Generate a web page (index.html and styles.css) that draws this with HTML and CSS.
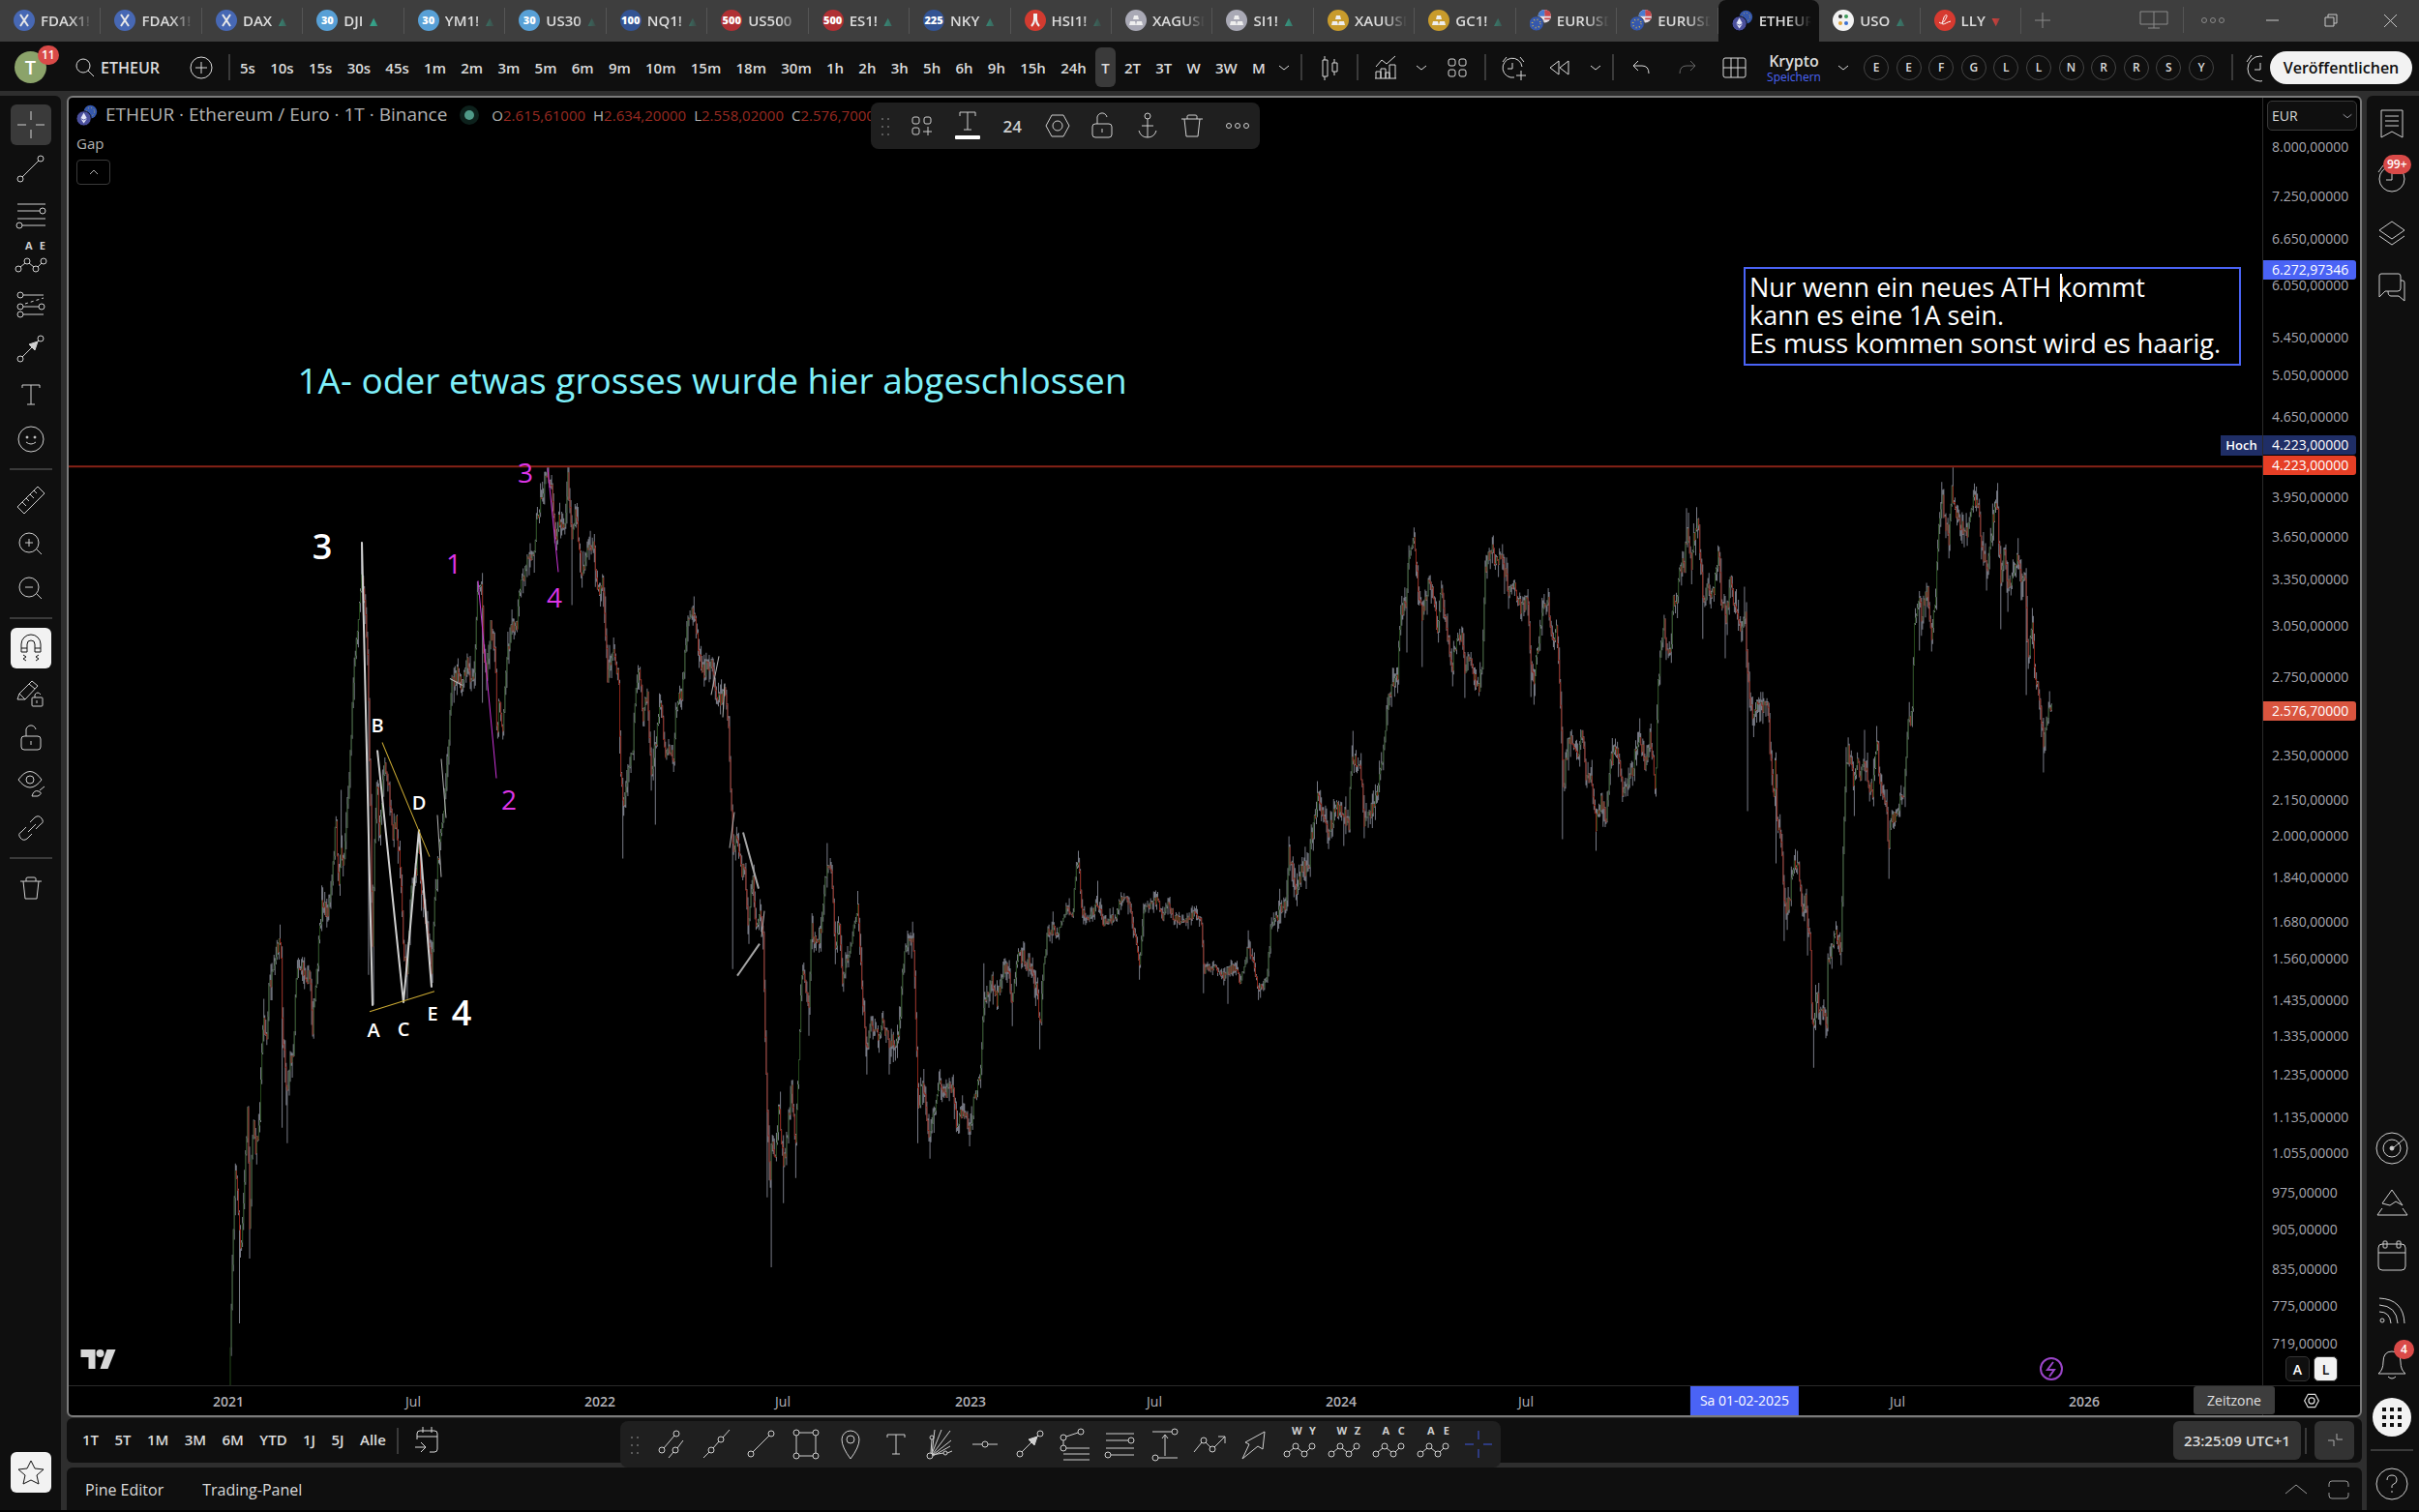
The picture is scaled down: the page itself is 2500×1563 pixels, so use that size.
FILE: index.html
```html
<!DOCTYPE html>
<html lang="de">
<head>
    <meta charset="UTF-8">
    <meta name="viewport" content="width=device-width, initial-scale=1.0">
    <title>ETHEUR Chart</title>
    <link rel="stylesheet" href="styles.css">
</head>
<body>

<!-- Icon sprite -->
<svg class="sprite" aria-hidden="true">
    <symbol id="i-x" viewBox="0 0 22 22"><circle cx="11" cy="11" r="11" fill="#4768b4" stroke="none"/><path d="M7 5l8 12M15 5L7 17" stroke="#e8e8e8" stroke-width="2"/></symbol>
    <symbol id="i-hsi" viewBox="0 0 22 22"><circle cx="11" cy="11" r="11" fill="#d23b30" stroke="none"/><path d="M10 4v6c0 3-1 5-3 7M12 4v6c0 3 1 5 3 7" stroke="#f0f0f0" stroke-width="2"/></symbol>
    <symbol id="i-bars" viewBox="0 0 22 22"><circle cx="11" cy="11" r="11" fill="currentColor" stroke="none"/><path d="M9 6h4l1 4H8zM5 12h5l1 4H4zM12 12h5l1 4h-7z" fill="#eee" stroke="none"/></symbol>
    <symbol id="i-eurusd" viewBox="0 0 26 26"><circle cx="18" cy="8" r="8" fill="#e6e0e6" stroke="none"/><path d="M18 0a8 8 0 0 1 8 8h-8z" fill="#c8474b" stroke="none"/><path d="M18 3h7M18 11h7" stroke="#c8474b" stroke-width="2"/><path d="M10 8a8 8 0 0 1 8-8v8z" fill="#4a7bd0" stroke="none"/><circle cx="8" cy="17" r="9" fill="#3558ad" stroke="#3e3e3e"/><circle cx="8" cy="17" r="5" stroke="#e0c24a" stroke-width="2" stroke-dasharray="1 3"/></symbol>
    <symbol id="i-eth" viewBox="0 0 26 26"><circle cx="17" cy="9" r="8" fill="#3558ad" stroke="none"/><circle cx="17" cy="9" r="5" stroke="#e0c24a" stroke-dasharray="1 3"/><circle cx="9" cy="17" r="9" fill="#4a4f9c" stroke="#000"/><path d="M9 10l4 7-4 6-4-6z" fill="#e4e6f8" stroke="none"/><path d="M5 17l4 2 4-2" stroke="#4a4f9c"/></symbol>
    <symbol id="i-uso" viewBox="0 0 22 22"><circle cx="11" cy="11" r="11" fill="#f2f2f2" stroke="none"/><g stroke="none"><circle cx="8" cy="7" r="2" fill="#333"/><circle cx="14" cy="7" r="2" fill="#3c9b5a"/><circle cx="8" cy="14" r="2" fill="#e0a53a"/><circle cx="14" cy="14" r="2" fill="#3a6fd0"/></g></symbol>
    <symbol id="i-lly" viewBox="0 0 22 22"><circle cx="11" cy="11" r="11" fill="#d63a30" stroke="none"/><path d="M5 13c3 3 6-1 8-6 1-2-2-2-3 1-1 4-3 7-1 7s4-2 8-3" stroke="#fff"/></symbol>

    <symbol id="i-plus" viewBox="0 0 36 36"><path d="M18 10v16M10 18h16"/></symbol>
    <symbol id="i-screens" viewBox="0 0 36 36"><path d="M4 9h28v13H4zM18 9v17M12 26h12"/></symbol>
    <symbol id="i-dots" viewBox="0 0 36 36"><circle cx="9" cy="18" r="2.5"/><circle cx="18" cy="18" r="2.5"/><circle cx="27" cy="18" r="2.5"/></symbol>
    <symbol id="i-min" viewBox="0 0 36 36"><path d="M12 18h13"/></symbol>
    <symbol id="i-restore" viewBox="0 0 36 36"><path d="M12 15h9v9h-9zM15 15v-3h9v9h-3"/></symbol>
    <symbol id="i-close" viewBox="0 0 36 36"><path d="M12 12l13 13M25 12L12 25"/></symbol>
    <symbol id="i-search" viewBox="0 0 36 36"><circle cx="16" cy="16" r="7"/><path d="M21 21l6 6"/></symbol>
    <symbol id="i-pluscircle" viewBox="0 0 36 36"><circle cx="18" cy="18" r="11"/><path d="M18 12v12M12 18h12"/></symbol>
    <symbol id="i-chev" viewBox="0 0 16 16"><path d="M3 6l5 4 5-4"/></symbol>
    <symbol id="i-up" viewBox="0 0 16 16"><path d="M4 10l4-4 4 4"/></symbol>
    <symbol id="i-candles" viewBox="0 0 36 36"><path d="M11 10h5v17h-5zM13 6v4M13 27v4M21 13h5v9h-5zM23 9v4M23 22v4"/></symbol>
    <symbol id="i-indicators" viewBox="0 0 36 36"><path d="M8 17l6-7 5 4 9-8M8 29v-7h5v7M13 29V19h5v10M18 29v-6h4v6M22 29V15h6v14M7 29h22"/></symbol>
    <symbol id="i-grid" viewBox="0 0 36 36"><rect x="9" y="9" width="7" height="7" rx="2"/><rect x="20" y="9" width="7" height="7" rx="2"/><rect x="9" y="20" width="7" height="7" rx="2"/><rect x="20" y="20" width="7" height="7" rx="2"/></symbol>
    <symbol id="i-alarm" viewBox="0 0 36 36"><path d="M27 17a10 10 0 1 0-8 11M17 13v6h-5M7 12l4-5M29 12l-4-5M26 21v10M21 26h10"/></symbol>
    <symbol id="i-rewind" viewBox="0 0 36 36"><path d="M17 11v14l-9-7zM27 11v14l-9-7z"/></symbol>
    <symbol id="i-undo" viewBox="0 0 36 36"><path d="M15 11l-5 5 5 5M10 16h9q7 0 7 8"/></symbol>
    <symbol id="i-redo" viewBox="0 0 36 36"><path d="M21 11l5 5-5 5M26 16h-9q-7 0-7 8"/></symbol>
    <symbol id="i-layout" viewBox="0 0 36 36"><rect x="7" y="8" width="23" height="20" rx="2"/><path d="M15 8v20M22 8v20M7 18h23"/></symbol>

    <symbol id="i-cross" viewBox="0 0 36 36"><path d="M18 4v9M18 23v9M4 18h9M23 18h9"/></symbol>
    <symbol id="i-line" viewBox="0 0 36 36"><circle cx="7" cy="28" r="3"/><circle cx="28" cy="7" r="3"/><path d="M9 26L26 9"/></symbol>
    <symbol id="i-fib" viewBox="0 0 36 36"><path d="M4 7h29M4 14h23M4 22h29M9 29h24"/><circle cx="30" cy="14" r="3"/><circle cx="6" cy="29" r="3"/></symbol>
    <symbol id="i-wave" viewBox="0 0 36 36"><circle cx="5" cy="28" r="3"/><circle cx="14" cy="20" r="3"/><circle cx="23" cy="28" r="3"/><circle cx="31" cy="20" r="3"/><path d="M7 26l5-4M16 22l5 4M25 26l4-4"/></symbol>
    <symbol id="i-forecast" viewBox="0 0 36 36"><circle cx="7" cy="8" r="3"/><circle cx="7" cy="20" r="3"/><circle cx="7" cy="28" r="3"/><circle cx="29" cy="20" r="3"/><path d="M10 8h21M10 20h16M10 28h21"/><path d="M12 17l19-6" stroke-dasharray="3 3"/></symbol>
    <symbol id="i-arrow" viewBox="0 0 36 36"><circle cx="7" cy="28" r="3"/><circle cx="28" cy="7" r="3"/><path d="M9 26L26 9"/><path d="M25 10l-3 9-6-6z" fill="currentColor"/></symbol>
    <symbol id="i-text" viewBox="0 0 36 36"><path d="M9 11V8h18v3M18 8v20M14 28h8"/></symbol>
    <symbol id="i-smile" viewBox="0 0 36 36"><circle cx="18" cy="18" r="13"/><path d="M13 21q5 4 10 0"/><circle cx="14" cy="16" r="1" fill="currentColor"/><circle cx="22" cy="16" r="1" fill="currentColor"/></symbol>
    <symbol id="i-ruler" viewBox="0 0 36 36"><path d="M4 26L25 5l7 7-21 21zM9 21l4 4M13 17l3 3M17 13l4 4M21 9l3 3"/></symbol>
    <symbol id="i-zoomin" viewBox="0 0 36 36"><circle cx="16" cy="17" r="10"/><path d="M24 24l5 5M16 13v8M12 17h8"/></symbol>
    <symbol id="i-zoomout" viewBox="0 0 36 36"><circle cx="16" cy="17" r="10"/><path d="M24 24l5 5M12 17h8"/></symbol>
    <symbol id="i-magnet" viewBox="0 0 36 36"><path d="M8 22v-8a10 10 0 0 1 20 0v8h-6v-8a4 4 0 0 0-8 0v8zM8 18h6M22 18h6M10 25l3 2-3 2 3 2M26 25l-3 2 3 2-3 2"/></symbol>
    <symbol id="i-penlock" viewBox="0 0 36 36"><path d="M4 24l2-6L19 5l6 5-13 14zM6 18l6 6M16 8l6 5"/><rect x="19" y="22" width="11" height="9" rx="1"/><path d="M22 22v-3q3-4 6 0M24 25v3"/></symbol>
    <symbol id="i-lock" viewBox="0 0 36 36"><rect x="8" y="16" width="20" height="14" rx="3"/><path d="M13 16v-5a5 5 0 0 1 10-2M18 21v4"/></symbol>
    <symbol id="i-eye" viewBox="0 0 36 36"><path d="M5 14q12-17 24 0q-12 16-24 0z"/><circle cx="17" cy="14" r="4"/><path d="M19 31q2-7 7-5t-1 5zM27 25l5-4"/></symbol>
    <symbol id="i-link" viewBox="0 0 36 36"><path d="M15 22l8-8M17 12l5-5q4-3 7 1t-1 6l-5 5M19 24l-5 5q-4 3-7-1t1-6l5-5"/></symbol>
    <symbol id="i-trash" viewBox="0 0 36 36"><path d="M7 11h22M10 11l2 18h12l2-18M13 11V8q0-1 2-1h6q2 0 2 1v3"/></symbol>
    <symbol id="i-star" viewBox="0 0 36 36"><path d="M18 6l4 8 9 1-7 6 2 9-8-4-8 4 2-9-7-6 9-1z"/></symbol>

    <symbol id="i-template" viewBox="0 0 36 36"><rect x="8" y="9" width="7" height="7" rx="2"/><rect x="20" y="9" width="7" height="7" rx="2"/><rect x="8" y="20" width="7" height="7" rx="2"/><path d="M24 19v9M19 24h9"/></symbol>
    <symbol id="i-color" viewBox="0 0 36 36"><path d="M10 8V4h16v4M18 4v18M14 22h8"/><rect x="5" y="28" width="26" height="4" rx="1" fill="#fff" stroke="none"/></symbol>
    <symbol id="i-hex" viewBox="0 0 36 36"><path d="M12 7h12l6 11-6 11H12L6 18z"/><circle cx="18" cy="18" r="5"/></symbol>
    <symbol id="i-anchor" viewBox="0 0 36 36"><circle cx="18" cy="8" r="3"/><path d="M18 11v19M12 18h12M9 23q2 7 9 7t9-7"/></symbol>
    <symbol id="i-grip" viewBox="0 0 16 24"><path d="M5 4v18M11 4v18" stroke-width="2" stroke-dasharray="2 6"/></symbol>

    <symbol id="i-channel" viewBox="0 0 36 36"><circle cx="8" cy="24" r="3"/><circle cx="23" cy="7" r="3"/><circle cx="22" cy="24" r="3"/><path d="M10 22L21 9M15 32l5-6M24 22l6-8"/></symbol>
    <symbol id="i-ray" viewBox="0 0 36 36"><circle cx="13" cy="24" r="3"/><circle cx="23" cy="13" r="3"/><path d="M5 32l6-6M15 22l6-7M25 11l7-8"/></symbol>
    <symbol id="i-rect" viewBox="0 0 36 36"><path d="M11 6h14M11 30h14M8 9v18M28 9v18"/><circle cx="8" cy="6" r="3"/><circle cx="28" cy="6" r="3"/><circle cx="8" cy="30" r="3"/><circle cx="28" cy="30" r="3"/></symbol>
    <symbol id="i-pin" viewBox="0 0 36 36"><path d="M18 33Q9 21 9 13a9 9 0 0 1 18 0q0 8-9 20z"/><circle cx="18" cy="13" r="4"/></symbol>
    <symbol id="i-fan" viewBox="0 0 36 36"><circle cx="7" cy="30" r="3"/><circle cx="9" cy="11" r="2"/><circle cx="23" cy="27" r="2"/><path d="M8 27L9 13M9 28l3-25M9 28L19 3M10 28L28 4M10 29l19-15M10 30l18-10M9 29l12-2M25 27l5-2"/></symbol>
    <symbol id="i-hline" viewBox="0 0 36 36"><circle cx="18" cy="18" r="3"/><path d="M5 18h10M21 18h10"/></symbol>
    <symbol id="i-fibext" viewBox="0 0 36 36"><circle cx="6" cy="11" r="3"/><circle cx="24" cy="5" r="3"/><circle cx="6" cy="22" r="3"/><path d="M9 10l12-4M6 14v5M9 22h24M6 28h27M6 34h27"/></symbol>
    <symbol id="i-range" viewBox="0 0 36 36"><circle cx="28" cy="5" r="3"/><circle cx="8" cy="32" r="3"/><path d="M5 5h20M11 32h20M18 30V9M15 12l3-4 3 4"/></symbol>
    <symbol id="i-path" viewBox="0 0 36 36"><circle cx="12" cy="14" r="3"/><circle cx="21" cy="23" r="3"/><path d="M2 26l8-10M14 16l5 5M23 21L34 10M27 10h7v7"/></symbol>
    <symbol id="i-bigarrow" viewBox="0 0 36 36"><path d="M6 33l7-15-4-2L29 5l-2 18-5-3z"/></symbol>

    <symbol id="i-watch" viewBox="0 0 36 36"><path d="M7 4h22v28l-11-6-11 6zM11 10h14M11 15h14M11 20h14"/></symbol>
    <symbol id="i-clock" viewBox="0 0 36 36"><circle cx="18" cy="19" r="13"/><path d="M18 13v7h-6M4 12l5-7"/></symbol>
    <symbol id="i-layers" viewBox="0 0 36 36"><path d="M18 6l13 9-13 9-13-9zM5 21l13 9 13-9"/></symbol>
    <symbol id="i-chat" viewBox="0 0 36 36"><path d="M7 4h18q2 0 2 3v12q0 3-3 3H11l-6 6V6q0-2 2-2zM27 11h2q2 0 2 2v19l-6-5h-8q-3 0-3-5"/></symbol>
    <symbol id="i-radar" viewBox="0 0 36 36"><circle cx="18" cy="18" r="16"/><circle cx="18" cy="18" r="9"/><circle cx="18" cy="18" r="2" fill="currentColor"/><path d="M20 17l11-9"/></symbol>
    <symbol id="i-pine" viewBox="0 0 36 36"><path d="M18 5l11 16-7-4-6 4-8-2zM8 24l-5 7h31l-5-7"/></symbol>
    <symbol id="i-cal" viewBox="0 0 36 36"><rect x="4" y="6" width="28" height="27" rx="4"/><path d="M4 15h28"/><rect x="9" y="3" width="4" height="7" rx="1"/><rect x="23" y="3" width="4" height="7" rx="1"/></symbol>
    <symbol id="i-feed" viewBox="0 0 36 36"><circle cx="8" cy="29" r="2"/><path d="M5 20q11 0 12 12M5 13q18 1 19 19M5 6q25 1 26 26"/></symbol>
    <symbol id="i-bell" viewBox="0 0 36 36"><path d="M4 29h28q-5-4-5-12 0-11-9-11T9 17q0 8-5 12zM14 32q4 4 8 0"/></symbol>
    <symbol id="i-help" viewBox="0 0 36 36"><circle cx="18" cy="18" r="16"/><path d="M13 14q0-5 5-5t5 5q0 3-3 4t-2 4M18 25v2"/></symbol>
    <symbol id="i-goto" viewBox="0 0 36 36"><path d="M9 17v-6q0-3 3-3h15q3 0 3 3v16q0 3-3 3h-5M9 14h21M15 4v6M24 4v6M7 25h10M13 20l5 5-5 5"/></symbol>
    <symbol id="i-collapse" viewBox="0 0 36 36"><path d="M11 18h6v6M20 11v6h6"/></symbol>
    <symbol id="i-wideup" viewBox="0 0 36 36"><path d="M7 22l11-9 11 9"/></symbol>
    <symbol id="i-max" viewBox="0 0 36 36"><path d="M8 15v-3q0-3 3-3h14q3 0 3 3v3M8 21v3q0 3 3 3h14q3 0 3-3v-3"/></symbol>
</svg>

<header class="tabbar">
    <nav class="tabs">
        <a class="tab" href="#"><svg class="logo"><use href="#i-x"/></svg><span class="tab-name">FDAX1!</span></a>
        <a class="tab" href="#"><svg class="logo"><use href="#i-x"/></svg><span class="tab-name">FDAX1!</span></a>
        <a class="tab" href="#"><svg class="logo"><use href="#i-x"/></svg><span class="tab-name">DAX <i class="up">▲</i></span></a>
        <a class="tab" href="#"><b class="logo sky">30</b><span class="tab-name">DJI <i class="up">▲</i></span></a>
        <a class="tab" href="#"><b class="logo sky">30</b><span class="tab-name">YM1! <i class="up">▲</i></span></a>
        <a class="tab" href="#"><b class="logo sky">30</b><span class="tab-name">US30 <i class="up">▲</i></span></a>
        <a class="tab" href="#"><b class="logo navy">100</b><span class="tab-name">NQ1! <i class="up">▲</i></span></a>
        <a class="tab" href="#"><b class="logo crimson">500</b><span class="tab-name">US500</span></a>
        <a class="tab" href="#"><b class="logo crimson">500</b><span class="tab-name">ES1! <i class="up">▲</i></span></a>
        <a class="tab" href="#"><b class="logo navy">225</b><span class="tab-name">NKY <i class="up">▲</i></span></a>
        <a class="tab" href="#"><svg class="logo"><use href="#i-hsi"/></svg><span class="tab-name">HSI1! <i class="up">▲</i></span></a>
        <a class="tab" href="#"><svg class="logo silver"><use href="#i-bars"/></svg><span class="tab-name">XAGUSD</span></a>
        <a class="tab" href="#"><svg class="logo silver"><use href="#i-bars"/></svg><span class="tab-name">SI1! <i class="up">▲</i></span></a>
        <a class="tab" href="#"><svg class="logo gold"><use href="#i-bars"/></svg><span class="tab-name">XAUUSD</span></a>
        <a class="tab" href="#"><svg class="logo gold"><use href="#i-bars"/></svg><span class="tab-name">GC1! <i class="up">▲</i></span></a>
        <a class="tab" href="#"><svg class="logo"><use href="#i-eurusd"/></svg><span class="tab-name">EURUSD</span></a>
        <a class="tab" href="#"><svg class="logo"><use href="#i-eurusd"/></svg><span class="tab-name">EURUSD</span></a>
        <a class="tab active" href="#"><svg class="logo"><use href="#i-eth"/></svg><span class="tab-name">ETHEUR</span></a>
        <a class="tab" href="#"><svg class="logo"><use href="#i-uso"/></svg><span class="tab-name">USO <i class="up">▲</i></span></a>
        <a class="tab" href="#"><svg class="logo"><use href="#i-lly"/></svg><span class="tab-name">LLY <i class="down">▼</i></span></a>
    </nav>
    <div class="window-tools">
        <button class="win-new" aria-label="Neuer Tab"><svg class="icon"><use href="#i-plus"/></svg></button>
        <button class="win-btn" aria-label="Bildschirme"><svg class="icon"><use href="#i-screens"/></svg></button>
        <button class="win-btn lined" aria-label="Menü"><svg class="icon"><use href="#i-dots"/></svg></button>
        <button class="win-btn bright" aria-label="Minimieren"><svg class="icon"><use href="#i-min"/></svg></button>
        <button class="win-btn bright" aria-label="Verkleinern"><svg class="icon"><use href="#i-restore"/></svg></button>
        <button class="win-btn bright" aria-label="Schliessen"><svg class="icon"><use href="#i-close"/></svg></button>
    </div>
</header>

<div class="toolbar">
    <button class="avatar" aria-label="Profil">T<span class="badge">11</span></button>
    <button class="symbol"><svg class="icon"><use href="#i-search"/></svg>ETHEUR</button>
    <button class="tool" aria-label="Vergleichen"><svg class="icon"><use href="#i-pluscircle"/></svg></button>
    <span class="sep"></span>
    <div class="intervals">
        <button>5s</button><button>10s</button><button>15s</button><button>30s</button><button>45s</button>
        <button>1m</button><button>2m</button><button>3m</button><button>5m</button><button>6m</button><button>9m</button>
        <button>10m</button><button>15m</button><button>18m</button><button>30m</button>
        <button>1h</button><button>2h</button><button>3h</button><button>5h</button><button>6h</button><button>9h</button>
        <button>15h</button><button>24h</button><button class="on">T</button><button>2T</button><button>3T</button>
        <button>W</button><button>3W</button><button>M</button>
    </div>
    <button class="drop" aria-label="Intervalle"><svg class="small"><use href="#i-chev"/></svg></button>
    <span class="sep"></span>
    <button class="tool" aria-label="Kerzen"><svg class="icon"><use href="#i-candles"/></svg></button>
    <span class="sep"></span>
    <button class="tool" aria-label="Indikatoren"><svg class="icon"><use href="#i-indicators"/></svg></button>
    <button class="drop" aria-label="Favoriten"><svg class="small"><use href="#i-chev"/></svg></button>
    <button class="tool" aria-label="Vorlagen"><svg class="icon"><use href="#i-grid"/></svg></button>
    <span class="sep"></span>
    <button class="tool" aria-label="Alarm"><svg class="icon"><use href="#i-alarm"/></svg></button>
    <button class="tool" aria-label="Replay"><svg class="icon"><use href="#i-rewind"/></svg></button>
    <button class="drop" aria-label="Replay Optionen"><svg class="small"><use href="#i-chev"/></svg></button>
    <span class="sep"></span>
    <button class="tool" aria-label="Rückgängig"><svg class="icon"><use href="#i-undo"/></svg></button>
    <button class="tool dim" aria-label="Wiederholen"><svg class="icon"><use href="#i-redo"/></svg></button>
    <button class="tool" aria-label="Layout"><svg class="icon"><use href="#i-layout"/></svg></button>
    <button class="layout-name">Krypto<span>Speichern</span></button>
    <button class="drop" aria-label="Layouts"><svg class="small"><use href="#i-chev"/></svg></button>
    <div class="letters">
        <button>E</button><button>E</button><button>F</button><button>G</button><button>L</button><button>L</button>
        <button>N</button><button>R</button><button>R</button><button>S</button><button>Y</button>
    </div>
    <span class="sep"></span>
    <button class="cut" aria-label="Schnellsuche"><svg class="icon"><use href="#i-clock"/></svg></button>
    <button class="publish">Veröffentlichen</button>
</div>

<div class="workspace">
    <aside class="side left">
        <div class="tools tools-draw">
            <button class="on" aria-label="Fadenkreuz"><svg class="icon"><use href="#i-cross"/></svg></button>
            <button aria-label="Trendlinie"><svg class="icon"><use href="#i-line"/></svg></button>
            <button aria-label="Fibonacci"><svg class="icon"><use href="#i-fib"/></svg></button>
            <button class="wave" aria-label="Elliott"><span><b>A</b><b>E</b></span><svg class="icon"><use href="#i-wave"/></svg></button>
            <button aria-label="Prognose"><svg class="icon"><use href="#i-forecast"/></svg></button>
            <button aria-label="Pfeil"><svg class="icon"><use href="#i-arrow"/></svg></button>
            <button aria-label="Text"><svg class="icon"><use href="#i-text"/></svg></button>
            <button aria-label="Icons"><svg class="icon"><use href="#i-smile"/></svg></button>
        </div>
        <hr>
        <div class="tools tools-zoom">
            <button aria-label="Messen"><svg class="icon"><use href="#i-ruler"/></svg></button>
            <button aria-label="Vergrössern"><svg class="icon"><use href="#i-zoomin"/></svg></button>
            <button aria-label="Verkleinern"><svg class="icon"><use href="#i-zoomout"/></svg></button>
        </div>
        <hr>
        <div class="tools tools-lock">
            <button class="white" aria-label="Magnet"><svg class="icon"><use href="#i-magnet"/></svg></button>
            <button aria-label="Zeichenmodus"><svg class="icon"><use href="#i-penlock"/></svg></button>
            <button aria-label="Sperren"><svg class="icon"><use href="#i-lock"/></svg></button>
            <button aria-label="Ausblenden"><svg class="icon"><use href="#i-eye"/></svg></button>
            <button aria-label="Verknüpfen"><svg class="icon"><use href="#i-link"/></svg></button>
        </div>
        <hr>
        <div class="tools">
            <button aria-label="Löschen"><svg class="icon"><use href="#i-trash"/></svg></button>
        </div>
        <div class="tools last">
            <button class="white" aria-label="Favoriten"><svg class="icon"><use href="#i-star"/></svg></button>
        </div>
    </aside>

    <main class="center">
        <section class="chart">
            <div class="plot" id="plot">
                <svg class="candles" id="candles" viewBox="0 0 2267 1330" preserveAspectRatio="none">
                    <path class="price-line" d="M0 381H2267"/>
                    <path class="wick" id="wicks"/>
                    <path class="bull" id="bulls"/>
                    <path class="bear" id="bears"/>
                    <path class="draw thick" d="M303 459L314 938M319 674L346 935L362 756L375 919"/>
                    <path class="draw" d="M381 741l4 64M385 683l5 61M394 600l13 7M672 577l-8 40M678 605l-2 35M688 738l-5 37M719 840l-3 27"/>
                    <path class="draw soft" d="M697 759l16 58M691 907l23-33"/>
                    <path class="draw yellow" d="M324 666L373 784M311 944L378 923"/>
                    <path class="draw pink" d="M423 499L442 703M495 383L506 490"/>
                </svg>
                <div class="legend">
                    <div class="legend-title">
                        <svg class="pair"><use href="#i-eth"/></svg>
                        <h1>ETHEUR · Ethereum / Euro · 1T · Binance</h1>
                        <span class="live"></span>
                        <span class="ohlc">O<em>2.615,61000</em></span>
                        <span class="ohlc">H<em>2.634,20000</em></span>
                        <span class="ohlc">L<em>2.558,02000</em></span>
                        <span class="ohlc">C<em>2.576,7000</em></span>
                    </div>
                    <div class="legend-study">Gap</div>
                    <button class="legend-toggle" aria-label="Legende einklappen"><svg class="small"><use href="#i-up"/></svg></button>
                </div>
                <div class="float-bar edit-bar">
                    <svg class="grip"><use href="#i-grip"/></svg>
                    <button aria-label="Vorlage"><svg class="icon"><use href="#i-template"/></svg></button>
                    <button aria-label="Textfarbe"><svg class="icon"><use href="#i-color"/></svg></button>
                    <button class="size">24</button>
                    <button aria-label="Einstellungen"><svg class="icon"><use href="#i-hex"/></svg></button>
                    <button aria-label="Sperren"><svg class="icon"><use href="#i-lock"/></svg></button>
                    <button aria-label="Verankern"><svg class="icon"><use href="#i-anchor"/></svg></button>
                    <button aria-label="Entfernen"><svg class="icon"><use href="#i-trash"/></svg></button>
                    <button aria-label="Mehr"><svg class="icon"><use href="#i-dots"/></svg></button>
                </div>
                <div class="note">
                    <textarea rows="3" aria-label="Notiz" spellcheck="false">Nur wenn ein neues ATH kommt
kann es eine 1A sein.
Es muss kommen sonst wird es haarig.</textarea>
                    <span class="caret"></span>
                </div>
                <span class="high-tag">Hoch</span>
                <svg class="tv" viewBox="0 0 36 20"><path d="M0 0h15v20H8V8H0z"/><circle cx="20" cy="4" r="4"/><path d="M27 0h9l-8 20h-8z"/></svg>
                <svg class="bolt" viewBox="0 0 26 26"><circle cx="13" cy="13" r="11"/><path d="M15 6l-6 8h7l-5 7"/></svg>
            </div>
            <div class="price-axis" id="prices">
                <select class="currency" aria-label="Währung"><option>EUR</option></select>
                <svg class="cur-chev"><use href="#i-chev"/></svg>
                <div class="scale-mode"><button>A</button><button class="on">L</button></div>
            </div>
            <div class="time-axis" id="times">
                <span class="zone-tip">Zeitzone</span>
            </div>
            <button class="axis-gear" aria-label="Achseneinstellungen"><svg class="gear"><use href="#i-hex"/></svg></button>
        </section>

        <div class="range-bar">
            <div class="ranges">
                <button>1T</button><button>5T</button><button>1M</button><button>3M</button><button>6M</button>
                <button>YTD</button><button>1J</button><button>5J</button><button>Alle</button>
            </div>
            <span class="sep"></span>
            <button class="tool" aria-label="Gehe zu"><svg class="icon"><use href="#i-goto"/></svg></button>
            <button class="clock">23:25:09 UTC+1</button>
            <span class="sep"></span>
            <button class="fold" aria-label="Einklappen"><svg class="icon"><use href="#i-collapse"/></svg></button>

            <div class="float-bar fav-bar">
                <svg class="grip"><use href="#i-grip"/></svg>
                <button aria-label="Kanal"><svg class="icon"><use href="#i-channel"/></svg></button>
                <button aria-label="Linie"><svg class="icon"><use href="#i-ray"/></svg></button>
                <button aria-label="Trendlinie"><svg class="icon"><use href="#i-line"/></svg></button>
                <button aria-label="Rechteck"><svg class="icon"><use href="#i-rect"/></svg></button>
                <button aria-label="Pin"><svg class="icon"><use href="#i-pin"/></svg></button>
                <button aria-label="Text"><svg class="icon"><use href="#i-text"/></svg></button>
                <button aria-label="Fächer"><svg class="icon"><use href="#i-fan"/></svg></button>
                <button aria-label="Horizontale"><svg class="icon"><use href="#i-hline"/></svg></button>
                <button aria-label="Pfeil"><svg class="icon"><use href="#i-arrow"/></svg></button>
                <button aria-label="Fib-Erweiterung"><svg class="icon"><use href="#i-fibext"/></svg></button>
                <button aria-label="Fib-Retracement"><svg class="icon"><use href="#i-fib"/></svg></button>
                <button aria-label="Preisspanne"><svg class="icon"><use href="#i-range"/></svg></button>
                <button aria-label="Pfad"><svg class="icon"><use href="#i-path"/></svg></button>
                <button aria-label="Pfeilmarkierung"><svg class="icon"><use href="#i-bigarrow"/></svg></button>
                <button class="wave" aria-label="Welle WY"><span><b>W</b><b>Y</b></span><svg class="icon"><use href="#i-wave"/></svg></button>
                <button class="wave" aria-label="Welle WZ"><span><b>W</b><b>Z</b></span><svg class="icon"><use href="#i-wave"/></svg></button>
                <button class="wave" aria-label="Welle AC"><span><b>A</b><b>C</b></span><svg class="icon"><use href="#i-wave"/></svg></button>
                <button class="wave" aria-label="Welle AE"><span><b>A</b><b>E</b></span><svg class="icon"><use href="#i-wave"/></svg></button>
                <button class="blue" aria-label="Fadenkreuz"><svg class="icon"><use href="#i-cross"/></svg></button>
            </div>
        </div>

        <footer class="panel-bar">
            <button>Pine Editor</button>
            <button>Trading-Panel</button>
            <div class="panel-icons">
                <button aria-label="Öffnen"><svg class="icon"><use href="#i-wideup"/></svg></button>
                <button aria-label="Maximieren"><svg class="icon"><use href="#i-max"/></svg></button>
            </div>
        </footer>
    </main>

    <aside class="side right">
        <div class="apps">
            <button aria-label="Watchlist"><svg class="icon"><use href="#i-watch"/></svg></button>
            <button aria-label="Alarme"><svg class="icon"><use href="#i-clock"/></svg><span class="badge wide">99+</span></button>
            <button aria-label="Objektbaum"><svg class="icon"><use href="#i-layers"/></svg></button>
            <button aria-label="Chat"><svg class="icon"><use href="#i-chat"/></svg></button>
        </div>
        <div class="apps bottom">
            <button aria-label="Screener"><svg class="icon"><use href="#i-radar"/></svg></button>
            <button aria-label="Pine"><svg class="icon"><use href="#i-pine"/></svg></button>
            <button aria-label="Kalender"><svg class="icon"><use href="#i-cal"/></svg></button>
            <button aria-label="Feed"><svg class="icon"><use href="#i-feed"/></svg></button>
            <button aria-label="Mitteilungen"><svg class="icon"><use href="#i-bell"/></svg><span class="badge">4</span></button>
            <button class="launcher" aria-label="Produkte"><svg viewBox="0 0 24 24"><path d="M2 4h20M2 12h20M2 20h20"/></svg></button>
        </div>
        <hr>
        <button class="help" aria-label="Hilfe"><svg class="icon"><use href="#i-help"/></svg></button>
    </aside>
</div>

<script src="chart.js"></script>
</body>
</html>
```

FILE: styles.css
```css
* {
    box-sizing: border-box;
}

body {
    margin: 0;
    height: 100vh;
    display: flex;
    flex-direction: column;
    overflow: hidden;
    padding-bottom: 2px;
    background: #000;
    color: #dbdbdb;
    font-family: "Open Sans", "Noto Sans", sans-serif;
    font-size: 15px;
}

button,
select,
textarea {
    font: inherit;
    color: inherit;
    background: none;
    border: 0;
    padding: 0;
    margin: 0;
}

button {
    display: flex;
    align-items: center;
    justify-content: center;
    flex: none;
    white-space: nowrap;
    cursor: pointer;
}

a {
    color: inherit;
    text-decoration: none;
}

svg {
    fill: none;
    stroke: currentColor;
    flex: none;
}

.sprite {
    position: absolute;
    width: 0;
    height: 0;
}

.icon {
    width: 36px;
    height: 36px;
}

.small {
    width: 16px;
    height: 16px;
}

.sep {
    flex: none;
    width: 2px;
    height: 27px;
    margin: 0 4px;
    background: #3a3a3a;
}

.badge {
    position: absolute;
    min-width: 21px;
    height: 20px;
    padding: 0 4px;
    border-radius: 10px;
    background: #d94a48;
    color: #fff;
    font-size: 12px;
    font-weight: 600;
    line-height: 20px;
    text-align: center;
}

/* Tabs */
.tabbar {
    display: flex;
    flex: none;
    height: 43px;
    background: #3e3e3e;
}

.tabs {
    display: flex;
    flex: 1;
    min-width: 0;
}

.tab {
    display: flex;
    align-items: center;
    flex: 1 1 0;
    min-width: 0;
    gap: 6px;
    padding: 0 2px 2px 14px;
    font-weight: 600;
    background: linear-gradient(#555, #555) right center / 1px 27px no-repeat;
}

.tab.active {
    background: #0f0f0f;
    border-radius: 8px 8px 0 0;
}

.tab-name {
    flex: 1;
    overflow: hidden;
    white-space: nowrap;
    -webkit-mask-image: linear-gradient(90deg, #000 50%, transparent 90%);
    mask-image: linear-gradient(90deg, #000 50%, transparent 90%);
}

.tab-name i {
    font-size: 14px;
    font-style: normal;
}

.up {
    color: #35a38a;
}

.down {
    color: #e0413c;
}

.logo {
    flex: none;
    width: 22px;
    height: 22px;
    border-radius: 50%;
    color: #fff;
    font-size: 11px;
    line-height: 22px;
    text-align: center;
}

svg.logo {
    border-radius: 0;
}

.sky {
    background: #58a0d6;
}

.navy {
    background: #335493;
}

.crimson {
    background: #b03034;
}

.silver {
    color: #a9a9b5;
}

.gold {
    color: #c89b2c;
}

.window-tools {
    display: flex;
    padding-bottom: 2px;
    color: #8a8a8a;
}

.win-new {
    width: 44px;
    margin-right: 62px;
}

.win-btn {
    width: 61px;
}

.win-btn.lined {
    background: linear-gradient(#555, #555) left center / 1px 27px no-repeat;
}

.win-btn.bright {
    color: #c8c8c8;
}

/* Top toolbar */
.toolbar {
    display: flex;
    align-items: center;
    flex: none;
    height: 51px;
    padding: 2px 7px 0 15px;
    background: #0f0f0f;
}

.avatar {
    position: relative;
    width: 33px;
    height: 33px;
    border-radius: 50%;
    background: #8ba36a;
    color: #fff;
    font-size: 20px;
    font-weight: 600;
}

.avatar .badge {
    top: -6px;
    left: 24px;
}

.symbol {
    justify-content: flex-start;
    width: 136px;
    padding-left: 22px;
    font-size: 16px;
    font-weight: 600;
}

.symbol .icon {
    margin-right: -2px;
}

.tool {
    width: 48px;
    height: 42px;
}

.tool.dim {
    color: #666;
}

.drop {
    width: 26px;
    height: 42px;
}

.intervals {
    display: flex;
    justify-content: space-between;
    width: 1072px;
    font-weight: 600;
}

.intervals button {
    height: 41px;
    padding: 0 6px;
}

.intervals .on {
    border-radius: 6px;
    background: #3a3a3a;
}

.layout-name {
    flex-direction: column;
    width: 76px;
    font-size: 16px;
    font-weight: 600;
    line-height: 20px;
}

.layout-name span {
    color: #4a63f5;
    font-size: 12px;
    font-weight: 400;
    line-height: 14px;
}

.letters {
    display: flex;
    flex: 1;
    justify-content: space-between;
    max-width: 362px;
    margin: 0 14px 0 8px;
}

.letters button {
    width: 26px;
    height: 26px;
    border: 1px solid #444;
    border-radius: 50%;
    font-size: 12px;
    font-weight: 600;
}

.cut {
    justify-content: flex-start;
    width: 20px;
    margin: 0 0 0 6px;
    overflow: hidden;
}

.publish {
    margin-left: auto;
    width: 147px;
    height: 34px;
    border-radius: 17px;
    background: #f2f2f2;
    color: #0f0f0f;
    font-size: 16px;
    font-weight: 600;
}

/* Work area */
.workspace {
    display: flex;
    flex: 1;
    min-height: 0;
    padding-top: 5px;
    background: #2e2e2e;
}

.side {
    display: flex;
    flex-direction: column;
    align-items: center;
    flex: none;
    background: #0f0f0f;
    color: #cfcfcf;
}

.side hr {
    width: 44px;
    height: 2px;
    margin: 9px 0;
    border: 0;
    background: #3a3a3a;
}

.left {
    width: 63px;
    padding: 9px 0 18px;
    border-radius: 0 6px 0 0;
}

.tools {
    display: flex;
    flex-direction: column;
    justify-content: space-between;
}

.tools-draw {
    height: 367px;
}

.tools-zoom {
    height: 134px;
}

.tools-lock {
    height: 228px;
}

.tools button {
    width: 42px;
    height: 42px;
    border-radius: 6px;
}

.tools .on {
    background: #3a3a3a;
}

.tools .white {
    background: #f2f2f2;
    color: #111;
}

.tools.last {
    margin-top: auto;
}

.wave {
    position: relative;
}

.wave span {
    position: absolute;
    top: 0;
    left: 12px;
    right: 2px;
    display: flex;
    justify-content: space-around;
    font-size: 11px;
    line-height: 14px;
}

.center {
    display: flex;
    flex-direction: column;
    flex: 1;
    min-width: 0;
    margin: 0 5px 0 6px;
}

/* Chart */
.chart {
    display: grid;
    grid-template-columns: 1fr 101px;
    grid-template-rows: 1fr 31px;
    flex: 1;
    min-height: 0;
    border: 2px solid #7b7b7b;
    border-radius: 6px;
    background: #000;
}

.plot {
    position: relative;
    min-width: 0;
    min-height: 0;
    overflow: hidden;
}

.candles {
    position: absolute;
    inset: 0;
    width: 100%;
    height: 100%;
}

.price-line {
    stroke: #872217;
    stroke-width: 2;
}

.wick {
    stroke: #787b86;
}

.bull {
    stroke: #24481a;
}

.bear {
    stroke: #8c2519;
}

.draw {
    stroke: #b5b5b5;
}

.thick {
    stroke: #cfcfcf;
    stroke-width: 2;
}

.soft {
    stroke: #a5a5a5;
    stroke-width: 2;
}

.yellow {
    stroke: #cbaa33;
}

.pink {
    stroke: #c935d6;
}

.mark {
    position: absolute;
    transform: translate(-50%, -50%);
    color: #fff;
    line-height: 1;
    white-space: nowrap;
}

.mark.big {
    font-size: 36px;
    font-weight: 600;
}

.mark.letter {
    font-size: 20px;
    font-weight: 600;
}

.mark.magenta {
    color: #dd35e6;
    font-size: 28px;
}

.mark.title {
    color: #7ff0fa;
    font-size: 37px;
}

.legend {
    position: absolute;
    top: 5px;
    left: 8px;
    color: #b2b2b2;
}

.legend-title {
    display: flex;
    align-items: center;
    height: 25px;
    gap: 8px;
}

.pair {
    width: 22px;
    height: 22px;
}

.legend h1 {
    margin: 0;
    font-size: 19px;
    font-weight: 400;
    line-height: 25px;
    white-space: nowrap;
}

.live {
    width: 10px;
    height: 10px;
    margin: 0 10px;
    border-radius: 50%;
    background: #4f9a88;
    box-shadow: 0 0 0 5px #0d211c;
}

.ohlc {
    font-size: 15px;
}

.ohlc em {
    color: #9a2b22;
    font-style: normal;
}

.legend-study {
    height: 34px;
    line-height: 34px;
}

.legend-toggle {
    width: 35px;
    height: 26px;
    border: 1px solid #3a3a3a;
    border-radius: 4px;
}

.float-bar {
    position: absolute;
    display: flex;
    align-items: center;
    height: 48px;
    padding-left: 7px;
    border-radius: 8px;
    background: #1f1f1f;
    color: #cfcfcf;
}

.float-bar button {
    flex: 1;
    height: 42px;
}

.grip {
    width: 16px;
    height: 24px;
    margin-right: 7px;
    color: #5a5a5a;
}

.edit-bar {
    top: 5px;
    left: 829px;
    width: 402px;
}

.edit-bar .size {
    font-size: 17px;
    font-weight: 600;
}

.note {
    position: absolute;
    top: 175px;
    right: 22px;
    width: 514px;
    height: 102px;
    padding: 4px;
    border: 2px solid #4a63f5;
}

.note textarea {
    display: block;
    width: 100%;
    height: 94px;
    overflow: hidden;
    resize: none;
    color: #fff;
    font-size: 27px;
    font-weight: 500;
    line-height: 29px;
    white-space: pre;
}

.caret {
    position: absolute;
    top: 5px;
    left: 325px;
    width: 2px;
    height: 29px;
    background: #fff;
}

.high-tag {
    position: absolute;
    top: 349px;
    right: 0;
    width: 43px;
    background: #1f2e66;
    color: #fff;
    font-size: 13px;
    font-weight: 600;
    line-height: 21px;
    text-align: center;
}

.tv {
    position: absolute;
    left: 12px;
    bottom: 17px;
    width: 37px;
    height: 20px;
    fill: #d8d8d8;
    stroke: none;
}

.bolt {
    position: absolute;
    right: 205px;
    bottom: 4px;
    width: 26px;
    height: 26px;
    color: #9a45c8;
    stroke-width: 2;
}

.price-axis {
    position: relative;
    border-left: 1px solid #2a2a2a;
    color: #a8a8b0;
    font-size: 14px;
}

.price {
    position: absolute;
    left: 9px;
    line-height: 20px;
    transform: translateY(-50%);
}

.price.tag {
    left: 0;
    width: 96px;
    padding-left: 9px;
    border-radius: 0 3px 3px 0;
    color: #fff;
    font-weight: 500;
}

.price.cursor {
    background: #4a63f5;
}

.price.high {
    background: #1f2e66;
}

.price.line {
    background: #e63f26;
}

.price.last {
    background: #d9553f;
}

.currency {
    position: absolute;
    top: 3px;
    left: 4px;
    width: 93px;
    height: 31px;
    padding: 0 4px;
    border: 1px solid #3a3a3a;
    border-radius: 5px;
    background: #0f0f0f;
    color: #dbdbdb;
    appearance: none;
}

.cur-chev {
    position: absolute;
    top: 12px;
    left: 80px;
    width: 14px;
    height: 14px;
    pointer-events: none;
}

.scale-mode {
    position: absolute;
    left: 23px;
    bottom: 4px;
    display: flex;
    gap: 4px;
}

.scale-mode button {
    width: 25px;
    height: 26px;
    border: 1px solid #333;
    border-radius: 5px;
    background: #0f0f0f;
    color: #fff;
    font-weight: 600;
}

.scale-mode .on {
    background: #f2f2f2;
    color: #0f0f0f;
}

.time-axis {
    position: relative;
    border-top: 1px solid #2a2a2a;
    color: #b2b2b8;
    font-size: 14px;
    line-height: 32px;
}

.time {
    position: absolute;
    top: 0;
    transform: translateX(-50%);
}

.time.year {
    font-weight: 600;
}

.time.cursor {
    padding: 0 10px;
    background: #4a63f5;
    color: #fff;
    line-height: 30px;
}

.zone-tip {
    position: absolute;
    top: 0;
    right: -13px;
    width: 84px;
    background: #3d3d3d;
    color: #e0e0e0;
    line-height: 29px;
    text-align: center;
    border-radius: 3px;
    z-index: 1;
}

.axis-gear {
    border-top: 1px solid #2a2a2a;
    border-left: 1px solid #2a2a2a;
}

.gear {
    width: 22px;
    height: 22px;
    stroke-width: 2;
}

/* Bars under the chart */
.range-bar {
    position: relative;
    display: flex;
    align-items: center;
    flex: none;
    height: 46px;
    margin-top: 1px;
    padding: 0 8px 0 9px;
    border-radius: 6px;
    background: #0f0f0f;
}

.ranges {
    display: flex;
    justify-content: space-between;
    width: 328px;
    font-weight: 600;
}

.ranges button {
    height: 40px;
    padding: 0 7px 2px;
}

.clock {
    width: 132px;
    height: 40px;
    margin-left: auto;
    border-radius: 6px;
    background: #333;
    font-weight: 600;
}

.fold {
    width: 41px;
    height: 40px;
    margin-left: 4px;
    border-radius: 6px;
    background: #333;
    color: #aaa;
}

.fav-bar {
    top: 3px;
    left: 572px;
    width: 910px;
    z-index: 2;
}

.blue {
    color: #3f58e0;
}

.panel-bar {
    display: flex;
    align-items: center;
    flex: none;
    height: 44px;
    margin-top: 5px;
    padding: 2px 6px 0 19px;
    gap: 40px;
    border-radius: 6px 6px 0 0;
    background: #0f0f0f;
    font-size: 16px;
}

.panel-icons {
    display: flex;
    gap: 8px;
    margin-left: auto;
    color: #999;
}

.right {
    width: 54px;
    padding: 9px 2px 9px 0;
    border-radius: 6px 0 0 0;
}

.apps {
    display: flex;
    flex-direction: column;
    justify-content: space-between;
    height: 209px;
}

.apps button {
    position: relative;
    width: 40px;
    height: 40px;
}

.apps .badge {
    top: -4px;
    left: 22px;
}

.apps .badge.wide {
    left: 11px;
}

.apps.bottom {
    height: 318px;
    margin-top: auto;
}

.launcher {
    border-radius: 50%;
    background: #f2f2f2;
    color: #0f0f0f;
}

.launcher svg {
    width: 24px;
    height: 24px;
    stroke-width: 4;
    stroke-dasharray: 4 4;
}

.right hr {
    margin: 13px 0 16px;
}
```

FILE: chart.js
```js
// Plot area in its own units, the viewBox of the candle svg
var W = 2267, H = 1330;
// offsets of the turning points below
var OX = 71, OY = 101;

// turning points of the daily price: x, y
var turns = [
    238,1400, 240,1307, 243,1203, 246,1240, 249,1301, 253,1215, 256,1142, 258,1264, 262,1148, 264,1185, 268,1166,
    270,1105, 272,1050, 276,1075, 278,1019, 283,1007, 287,977, 290,973, 292,1062, 297,1130, 300,1087, 303,1099,
    305,1032, 307,995, 315,1004, 321,1013, 323,1062, 327,1013, 333,928, 338,946, 343,915, 347,848, 350,915,
    353,873, 355,897, 360,817, 363,756, 366,683, 369,664, 372,609, 374,585, 377,621, 380,683, 383,830, 385,989,
    387,879, 390,793, 392,866, 397,793, 401,805, 406,866, 409,842, 415,915, 417,989, 421,1001, 425,915, 430,903,
    433,860, 435,921, 442,958, 446,1001, 450,915, 455,872, 460,817, 465,744, 467,707, 473,695, 477,713, 483,686,
    487,707, 491,686, 493,609, 498,603, 500,677, 503,695, 507,646, 512,683, 514,768, 516,719, 520,756, 523,683,
    530,640, 534,652, 537,609, 541,600, 547,566, 551,579, 554,542, 559,517, 563,502, 566,487, 571,508, 575,566,
    577,536, 583,551, 587,493, 591,554, 595,530, 601,591, 607,572, 613,560, 618,615, 623,597, 628,701, 633,670,
    639,695, 642,811, 645,830, 650,793, 654,775, 657,719, 661,689, 665,744, 669,708, 673,799, 679,759, 683,714,
    687,779, 691,769, 696,784, 699,729, 705,714, 710,650, 717,625, 721,664, 727,694, 735,684, 740,714, 746,724,
    749,704, 753,759, 756,839, 758,888, 761,858, 766,903, 769,888, 773,963, 778,908, 781,958, 785,943, 789,958,
    790,1047, 793,1147, 796,1217, 797,1177, 801,1207, 805,1137, 810,1207, 814,1167, 818,1122, 822,1182, 826,1077,
    829,993, 832,1018, 836,1037, 839,953, 844,983, 850,948, 855,888, 860,908, 863,983, 867,953, 871,1013, 877,983,
    881,973, 886,933, 891,1023, 896,1087, 901,1057, 908,1072, 912,1052, 919,1077, 929,1072, 933,998, 938,973,
    944,968, 948,1097, 949,1147, 953,1117, 958,1152, 961,1177, 965,1147, 971,1117, 977,1132, 985,1117, 988,1162,
    993,1147, 1003,1162, 1007,1132, 1013,1112, 1016,1057, 1018,1028, 1025,1013, 1031,1033, 1039,998, 1043,1003,
    1046,1037, 1053,983, 1060,993, 1066,998, 1072,1023, 1075,1062, 1079,988, 1084,958, 1093,968, 1102,938,
    1109,943, 1112,893, 1115,888, 1118,943, 1125,948, 1135,933, 1140,953, 1153,948, 1159,926, 1168,933, 1173,968,
    1178,998, 1182,943, 1196,928, 1201,948, 1207,933, 1214,950, 1227,950, 1236,943, 1242,953, 1244,1003,
    1256,998, 1263,1008, 1276,998, 1282,1015, 1290,978, 1296,998, 1301,1023, 1309,1013, 1314,953, 1323,943,
    1330,928, 1332,878, 1339,923, 1347,893, 1352,903, 1355,867, 1362,820, 1367,844, 1373,864, 1379,836, 1387,836,
    1394,852, 1397,773, 1402,792, 1407,800, 1410,848, 1421,832, 1429,788, 1434,729, 1439,701, 1444,705, 1448,634,
    1453,622, 1456,571, 1461,555, 1466,610, 1470,638, 1476,603, 1481,607, 1485,650, 1490,603, 1496,658, 1501,690,
    1506,658, 1511,658, 1514,694, 1519,674, 1523,697, 1529,709, 1532,682, 1535,587, 1542,567, 1546,579, 1552,575,
    1559,610, 1566,607, 1572,630, 1579,622, 1582,678, 1585,701, 1590,670, 1594,626, 1600,622, 1604,658, 1609,650,
    1612,705, 1616,816, 1619,777, 1623,757, 1629,781, 1636,757, 1639,808, 1645,804, 1649,852, 1655,828, 1660,848,
    1664,788, 1671,773, 1677,820, 1682,816, 1687,796, 1691,769, 1695,757, 1700,792, 1705,761, 1711,812, 1713,717,
    1716,670, 1720,638, 1722,674, 1727,670, 1729,618, 1734,622, 1735,587, 1741,583, 1744,539, 1748,587, 1751,551,
    1755,539, 1759,599, 1761,622, 1764,603, 1770,618, 1776,571, 1779,618, 1784,638, 1788,603, 1793,626, 1800,658,
    1804,630, 1806,701, 1811,737, 1818,729, 1827,725, 1830,788, 1833,828, 1835,773, 1836,844, 1840,860, 1843,907,
    1844,940, 1847,935, 1850,931, 1852,900, 1858,886, 1863,949, 1866,927, 1868,962, 1871,967, 1872,1034,
    1874,1065, 1878,1029, 1882,1052, 1886,1043, 1888,1060, 1889,989, 1893,980, 1898,967, 1903,980, 1905,869,
    1907,806, 1910,775, 1916,811, 1920,788, 1923,806, 1927,784, 1930,806, 1935,819, 1940,766, 1943,811, 1949,824,
    1952,877, 1955,842, 1962,842, 1964,819, 1968,824, 1972,744, 1976,739, 1978,654, 1983,619, 1986,636, 1992,605,
    1996,663, 2000,623, 2003,552, 2007,511, 2010,534, 2014,561, 2017,502, 2020,525, 2025,538, 2033,552, 2039,511,
    2045,529, 2049,569, 2053,592, 2060,534, 2064,516, 2068,605, 2072,565, 2075,605, 2080,601, 2086,574, 2089,605,
    2093,601, 2096,681, 2100,645, 2104,703, 2108,721, 2112,770, 2116,735, 2118,728, 2121,732
];

// days with a long wick: x, y of its end
var spikes = [
    238,1384, 247,1367, 258,1300, 292,1165, 297,1181, 290,955, 353,816, 374,560, 381,1007, 386,1038, 421,1032,
    446,1020, 499,726, 566,483, 587,483, 591,625, 644,887, 677,852, 717,616, 757,1001, 793,1237, 797,1309,
    810,1243, 822,1217, 836,1070, 855,871, 896,1110, 919,1110, 948,1181, 961,1197, 943,952, 1017,995, 1046,1060,
    1075,1084, 1115,879, 1135,910, 1178,1012, 1244,1026, 1269,1037, 1290,961, 1301,1033, 1332,864, 1362,807,
    1389,874, 1398,755, 1410,866, 1461,545, 1454,674, 1470,689, 1501,709, 1514,721, 1542,555, 1582,720, 1585,728,
    1615,867, 1649,879, 1695,742, 1711,823, 1743,525, 1754,524, 1748,602, 1760,660, 1783,680, 1803,606, 1806,838,
    1836,892, 1844,972, 1858,879, 1868,987, 1874,1103, 1888,1070, 1903,997, 1916,843, 1927,754, 1940,750,
    1952,908, 1984,672, 1996,673, 2007,498, 2014,577, 2018,483, 2053,610, 2065,499, 2068,650, 2075,632, 2086,556,
    2094,718, 2112,798, 2118,714
];

var seed = 7;
function rand() {
    seed = (seed * 16807) % 2147483647;
    return seed / 2147483647;
}

function priceAt(x) {
    for (var i = 2; i < turns.length; i += 2) {
        if (x <= turns[i]) {
            var t = (x - turns[i - 2]) / (turns[i] - turns[i - 2]);
            return turns[i - 1] + t * (turns[i + 1] - turns[i - 1]);
        }
    }
    return turns[turns.length - 1];
}

// 2023 was a quiet year
function volatility(x) {
    return x > 1090 && x < 1312 ? 0.5 : 0.9;
}

function bar(x, a, b) {
    return 'M' + (x - OX).toFixed(1) + ' ' + (a - OY).toFixed(1) + 'V' + (b - OY).toFixed(1);
}

var wicks = '', bulls = '', bears = '';
var open = 1432;
for (var x = 238; x <= 2121; x += 1.051) {
    var v = volatility(x);
    var close = priceAt(x) + (rand() - 0.5) * 18 * v;
    var high = Math.min(open, close) - rand() * rand() * 22 * v;
    var low = Math.max(open, close) + rand() * rand() * 24 * v;
    if (x === 238) {
        low = 1384;
    }
    for (var s = 0; s < spikes.length; s += 2) {
        if (Math.abs(spikes[s] - x) < 0.53) {
            high = Math.min(high, spikes[s + 1]);
            low = Math.max(low, spikes[s + 1]);
        }
    }
    high = Math.max(high, 483);
    wicks += bar(x, high, low);
    if (close < open) {
        bulls += bar(x, close, open);
    } else {
        bears += bar(x, open, close + 1);
    }
    open = close;
}
document.getElementById('wicks').setAttribute('d', wicks);
document.getElementById('bulls').setAttribute('d', bulls);
document.getElementById('bears').setAttribute('d', bears);

function addLabel(parent, cls, text, left, top) {
    var el = document.createElement('span');
    el.className = cls;
    el.textContent = text;
    if (left !== null) el.style.left = (left / W * 100) + '%';
    if (top !== null) el.style.top = (top / H * 100) + '%';
    parent.appendChild(el);
}

// Wave counts and text drawings
var plot = document.getElementById('plot');
[
    ['big', '3', 333, 565], ['big', '4', 477, 1046],
    ['letter', 'A', 386, 1064], ['letter', 'B', 390, 750], ['letter', 'C', 417, 1063],
    ['letter', 'D', 433, 829], ['letter', 'E', 447, 1047],
    ['magenta', '1', 469, 582], ['magenta', '2', 526, 825],
    ['magenta', '3', 543, 488], ['magenta', '4', 573, 617],
    ['title', '1A- oder etwas grosses wurde hier abgeschlossen', 736, 392]
].forEach(function (m) {
    addLabel(plot, 'mark ' + m[0], m[1], m[2] - OX, m[3] - OY);
});

// Logarithmic price scale
var prices = document.getElementById('prices');
function priceY(p) {
    return 51 + Math.log(8000 / p) * 513;
}
function format(p) {
    return p.toLocaleString('de-DE', { minimumFractionDigits: 5 });
}
[8000, 7250, 6650, 6050, 5450, 5050, 4650, 3950, 3650, 3350, 3050, 2750, 2350, 2150, 2000, 1840, 1680,
    1560, 1435, 1335, 1235, 1135, 1055, 975, 905, 835, 775, 719].forEach(function (p) {
    addLabel(prices, 'price', format(p), null, priceY(p));
});
addLabel(prices, 'price tag cursor', '6.272,97346', null, 178);
addLabel(prices, 'price tag high', '4.223,00000', null, 359);
addLabel(prices, 'price tag line', '4.223,00000', null, 380);
addLabel(prices, 'price tag last', '2.576,70000', null, 634);

// Time scale
var times = document.getElementById('times');
[['2021', 236], ['Jul', 427], ['2022', 620], ['Jul', 809], ['2023', 1003], ['Jul', 1193],
    ['2024', 1386], ['Jul', 1577], ['Jul', 1961], ['2026', 2154]].forEach(function (t) {
    addLabel(times, t[0] === 'Jul' ? 'time' : 'time year', t[0], t[1] - OX, null);
});
addLabel(times, 'time cursor', 'Sa 01-02-2025', 1803 - OX, null);
```
